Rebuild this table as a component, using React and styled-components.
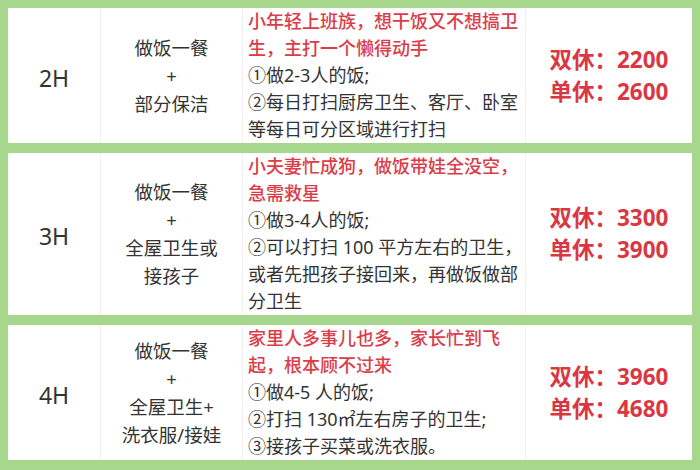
import React from "react";
import styled, { createGlobalStyle } from "styled-components";

const Global = createGlobalStyle`
  html, body { margin: 0; padding: 0; }
  body {
    background: #a7d78c;
    font-family: "Noto Sans", "Noto Sans CJK SC", sans-serif;
  }
`;

const Page = styled.div`
  width: 700px;
  height: 470px;
  box-sizing: border-box;
  padding: 8px 8px 0 8px;
  display: flex;
  flex-direction: column;
  gap: 10px;
  background: #a7d78c;
  overflow: hidden;
`;

const Card = styled.div`
  display: grid;
  grid-template-columns: 92px 142px 283px 167px;
  background: #ffffff;
  min-height: ${(p) => p.$h}px;
`;

const Cell = styled.div`
  display: flex;
  flex-direction: column;
  justify-content: center;
  align-items: ${(p) => (p.$left ? "flex-start" : "center")};
  border-left: ${(p) => (p.$first ? "none" : "1px solid #f1f1f1")};
  padding-left: ${(p) => (p.$left ? "5px" : "0")};
  box-sizing: border-box;
`;

const Hours = styled.div`
  font-size: 23px;
  color: #333333;
  padding-top: 4px;
`;

const ServiceLine = styled.div`
  font-size: 18.5px;
  line-height: 28px;
  color: #333333;
  white-space: nowrap;
  text-align: center;
`;

const DescLine = styled.div`
  font-size: 18px;
  line-height: 27px;
  white-space: nowrap;
  color: ${(p) => (p.$red ? "#db3c48" : "#333333")};
  font-weight: ${(p) => (p.$red ? 500 : 400)};
`;

const Price = styled.div`
  font-size: 22.5px;
  line-height: 32px;
  font-weight: 700;
  color: #da3743;
  white-space: nowrap;
`;

const rows = [
  {
    h: 135,
    hours: "2H",
    service: ["做饭一餐", "+", "部分保洁"],
    red: ["小年轻上班族，想干饭又不想搞卫", "生，主打一个懒得动手"],
    desc: ["①做2-3人的饭;", "②每日打扫厨房卫生、客厅、卧室", "等每日可分区域进行打扫"],
    prices: ["双休：2200", "单休：2600"],
  },
  {
    h: 161,
    hours: "3H",
    service: ["做饭一餐", "+", "全屋卫生或", "接孩子"],
    red: ["小夫妻忙成狗，做饭带娃全没空，", "急需救星"],
    desc: ["①做3-4人的饭;", "②可以打扫 100 平方左右的卫生，", "或者先把孩子接回来，再做饭做部", "分卫生"],
    prices: ["双休：3300", "单休：3900"],
  },
  {
    h: 135,
    hours: "4H",
    service: ["做饭一餐", "+", "全屋卫生+", "洗衣服/接娃"],
    red: ["家里人多事儿也多，家长忙到飞", "起，根本顾不过来"],
    desc: ["①做4-5 人的饭;", "②打扫 130㎡左右房子的卫生;", "③接孩子买菜或洗衣服。"],
    prices: ["双休：3960", "单休：4680"],
  },
];

export default function App() {
  return (
    <>
      <Global />
      <Page>
        {rows.map((r) => (
          <Card key={r.hours} $h={r.h}>
            <Cell $first>
              <Hours>{r.hours}</Hours>
            </Cell>
            <Cell>
              {r.service.map((s, i) => (
                <ServiceLine key={i}>{s}</ServiceLine>
              ))}
            </Cell>
            <Cell $left>
              {r.red.map((s, i) => (
                <DescLine key={"r" + i} $red>
                  {s}
                </DescLine>
              ))}
              {r.desc.map((s, i) => (
                <DescLine key={"d" + i}>{s}</DescLine>
              ))}
            </Cell>
            <Cell>
              {r.prices.map((p, i) => (
                <Price key={i}>{p}</Price>
              ))}
            </Cell>
          </Card>
        ))}
      </Page>
    </>
  );
}
